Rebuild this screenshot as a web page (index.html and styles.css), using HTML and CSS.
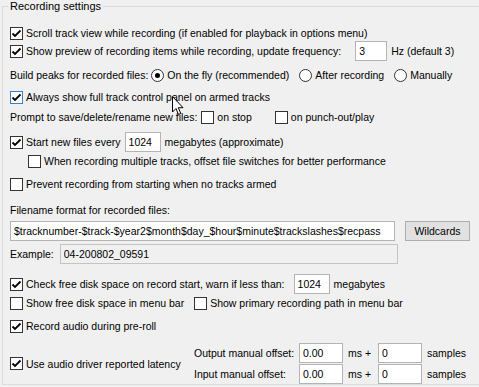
FILE: index.html
```html
<!DOCTYPE html>
<html lang="en">
<head>
<meta charset="UTF-8">
<title>Recording settings</title>
<link rel="stylesheet" href="styles.css">
</head>
<body>

<fieldset class="group">
  <legend>Recording settings</legend>

  <div class="row r1">
    <label class="check"><span class="box"><svg viewBox="0 0 11 11"><path d="M1.5 5.5 L4 8 L9.5 2.5"/></svg></span>Scroll track view while recording (if enabled for playback in options menu)</label>
  </div>

  <div class="row tall r2">
    <label class="check"><span class="box"><svg viewBox="0 0 11 11"><path d="M1.5 5.5 L4 8 L9.5 2.5"/></svg></span>Show preview of recording items while recording, update frequency:</label>
    <input class="field hz" type="text" value="3">
    <span class="after">Hz (default 3)</span>
  </div>

  <div class="row r3">
    <span class="lbl">Build peaks for recorded files:</span>
    <label class="check opt"><span class="radio on"></span>On the fly (recommended)</label>
    <label class="check opt"><span class="radio"></span>After recording</label>
    <label class="check opt"><span class="radio"></span>Manually</label>
  </div>

  <div class="row r4">
    <label class="check"><span class="box hover"><svg viewBox="0 0 11 11"><path d="M1.5 5.5 L4 8 L9.5 2.5"/></svg></span>Always show full track control panel on armed tracks</label>
  </div>

  <div class="row r5">
    <span class="lbl">Prompt to save/delete/rename new files:</span>
    <label class="check opt"><span class="box"></span>on stop</label>
    <label class="check opt"><span class="box"></span>on punch-out/play</label>
  </div>

  <div class="row tall r6">
    <label class="check"><span class="box"><svg viewBox="0 0 11 11"><path d="M1.5 5.5 L4 8 L9.5 2.5"/></svg></span>Start new files every</label>
    <input class="field mb" type="text" value="1024">
    <span class="after">megabytes (approximate)</span>
  </div>

  <div class="row r7">
    <label class="check"><span class="box"></span>When recording multiple tracks, offset file switches for better performance</label>
  </div>

  <div class="row r8">
    <label class="check"><span class="box"></span>Prevent recording from starting when no tracks armed</label>
  </div>

  <div class="row r9">
    <span class="lbl">Filename format for recorded files:</span>
  </div>

  <div class="row tall r10">
    <input class="field fname" type="text" value="$tracknumber-$track-$year2$month$day_$hour$minute$trackslashes$recpass">
    <button class="btn">Wildcards</button>
  </div>

  <div class="row tall r11">
    <span class="lbl">Example:</span>
    <input class="field example" type="text" value="04-200802_09591" readonly>
  </div>

  <div class="row tall r12">
    <label class="check"><span class="box"><svg viewBox="0 0 11 11"><path d="M1.5 5.5 L4 8 L9.5 2.5"/></svg></span>Check free disk space on record start, warn if less than:</label>
    <input class="field mb" type="text" value="1024">
    <span class="after">megabytes</span>
  </div>

  <div class="row r13">
    <label class="check"><span class="box"></span>Show free disk space in menu bar</label>
    <label class="check opt"><span class="box"></span>Show primary recording path in menu bar</label>
  </div>

  <div class="row r14">
    <label class="check"><span class="box"><svg viewBox="0 0 11 11"><path d="M1.5 5.5 L4 8 L9.5 2.5"/></svg></span>Record audio during pre-roll</label>
  </div>

  <div class="latency">
    <label class="check"><span class="box"><svg viewBox="0 0 11 11"><path d="M1.5 5.5 L4 8 L9.5 2.5"/></svg></span>Use audio driver reported latency</label>
    <div class="offsets">
      <span>Output manual offset:</span>
      <input class="field" type="text" value="0.00">
      <span class="unit">ms +</span>
      <input class="field" type="text" value="0">
      <span class="unit">samples</span>
      <span>Input manual offset:</span>
      <input class="field" type="text" value="0.00">
      <span class="unit">ms +</span>
      <input class="field" type="text" value="0">
      <span class="unit">samples</span>
    </div>
  </div>
</fieldset>

<!-- mouse pointer left in the capture -->
<svg class="cursor" viewBox="0 0 13 20" width="13" height="20"><path d="M0.5 0.5 L0.5 16 L4 12.5 L6.5 18.5 L8.8 17.5 L6.3 11.7 L11 11.7 Z"/></svg>

</body>
</html>
```

FILE: styles.css
```css
body {
  margin:0; background:#f0f0f0; color:#000;
  font-family:"Liberation Sans", Arial, sans-serif; font-size:10.5px;
  width:479px; height:387px; overflow:hidden; position:relative;
}

.group {
  margin:0 0 0 2px; padding:11px 0 0 7px;
  border:1px solid #dcdcdc; border-right:none; width:477px; height:385px;
  box-sizing:border-box; min-width:0; overflow:hidden;
}
.group legend { padding:0 2px; margin-left:-2px; line-height:13px; font-size:11px; }

.row { display:flex; align-items:center; height:18px; white-space:nowrap; }
.row.tall { height:20px; }

.r2 { margin-top:-1px; }
.r3 { margin-top:5px; }
.r4 { margin-top:4px; }
.r5 { margin-top:2px; }
.r6 { margin-top:6px; }
.r7 { padding-left:18px; }
.r8 { margin-top:5px; }
.r9 { margin-top:8px; }
.r10 { margin-top:2px; }
.r11 { margin-top:3px; }
.r12 { margin-top:10px; }
.r14 { margin-top:5px; }

/* checkbox + radio */
.check { display:inline-flex; align-items:center; }
.box, .radio {
  width:13px; height:13px; box-sizing:border-box; flex:none;
  border:1px solid #333; background:#fff; margin-right:3px;
  display:inline-flex; align-items:center; justify-content:center;
}
.box svg { width:11px; height:11px; }
.box path { fill:none; stroke:#000; stroke-width:1.8; }
.box.hover { border-color:#3d7fc4; }
.radio { border-radius:50%; }
.radio.on::after {
  content:""; width:5px; height:5px; border-radius:50%; background:#000;
}
.opt { margin-left:10px; }
.r3 .opt:first-of-type { margin-left:3px; }
.r5 .opt { margin-left:4px; }
.r5 .opt + .opt { margin-left:23px; }
.r13 .opt { margin-left:10px; }

/* text fields */
.field {
  height:20px; box-sizing:border-box; border:1px solid #b4b4b4; background:#fff;
  padding:0 3px; margin:0; font:inherit; color:#000; outline:none;
}
.hz { width:32px; margin-left:14px; }
.mb { width:36px; margin-left:9px; }
.r6 .mb { margin-left:4px; }
.after { margin-left:4px; }
.fname { width:385px; }
.example { width:338px; margin-left:6px; background:#f0f0f0; border-color:#c4c4c4; }

.btn {
  width:65px; height:20px; margin-left:10px; padding:0;
  background:#e1e1e1; border:1px solid #adadad; font:inherit; color:#000;
}

/* latency block */
.latency { display:flex; align-items:center; margin-top:8px; height:41px; }
.latency .check { width:184px; }
.offsets {
  display:grid; grid-template-columns:105px 44px 35px 44px auto;
  row-gap:1px; align-items:center; white-space:nowrap;
}
.offsets .field { width:44px; }
.offsets .unit { padding-left:5px; }

.cursor { position:absolute; left:172px; top:96px; }
.cursor path { fill:#fff; stroke:#000; stroke-width:1; }
```
